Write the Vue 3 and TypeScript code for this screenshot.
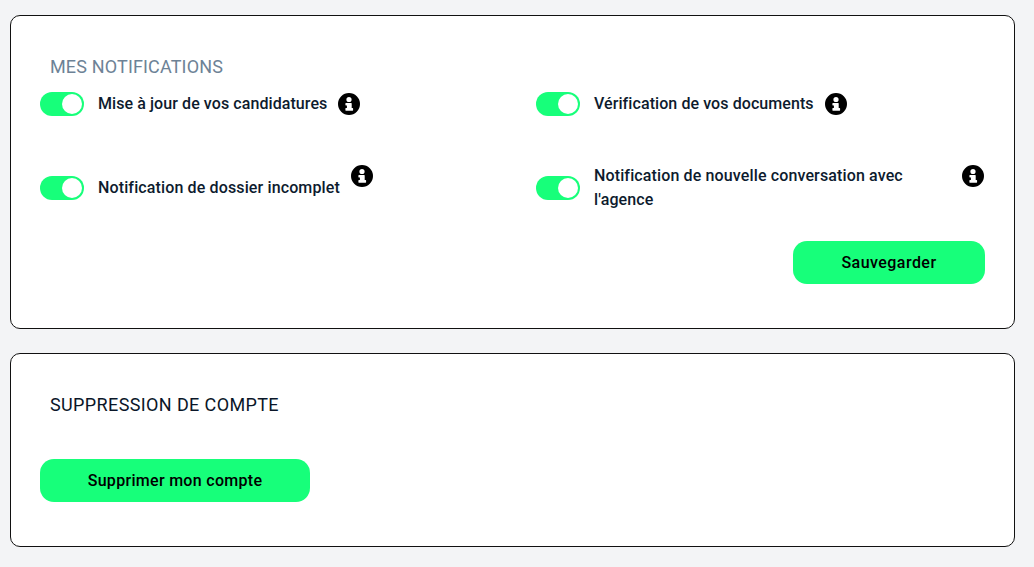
<template>
  <div class="page">
    <section class="card card-notif">
      <h2 class="title title-muted">MES NOTIFICATIONS</h2>
      <div class="notif-grid">
        <div v-for="n in notifications" :key="n.label" class="notif" :class="{ tall: n.tall }">
          <span class="toggle"><span class="knob"></span></span>
          <span class="label">{{ n.label }}</span>
          <svg class="info" :class="{ raised: n.tall }" viewBox="0 0 22 22">
            <path fill-rule="evenodd" d="M11 0a11 11 0 1 0 0 22a11 11 0 1 0 0-22zM11 3.9a2.6 2.6 0 1 1 0 5.2a2.6 2.6 0 1 1 0-5.2zM7.9 10h5.3c.3 0 .5.2.5.5V15h.9c.3 0 .5.2.5.5v1.7c0 .3-.2.5-.5.5H7.9c-.3 0-.5-.2-.5-.5v-1.7c0-.3.2-.5.5-.5h1V12.5h-1c-.3 0-.5-.2-.5-.5v-1.5c0-.3.2-.5.5-.5z" />
          </svg>
        </div>
      </div>
      <div class="actions">
        <button class="btn btn-save">Sauvegarder</button>
      </div>
    </section>
    <section class="card card-delete">
      <h2 class="title title-dark">SUPPRESSION DE COMPTE</h2>
      <button class="btn btn-delete">Supprimer mon compte</button>
    </section>
  </div>
</template>

<script setup lang="ts">
const notifications = [
  { label: 'Mise à jour de vos candidatures', tall: false },
  { label: 'Vérification de vos documents', tall: false },
  { label: 'Notification de dossier incomplet', tall: true },
  { label: 'Notification de nouvelle conversation avec l\'agence', tall: true },
]
</script>

<style>
body {
  background: #f3f4f6;
}
</style>

<style scoped>
.page {
  padding: 15px 19px 20px 10px;
  display: flex;
  flex-direction: column;
  gap: 24px;
  font-family: Roboto, "Liberation Sans", sans-serif;
  color: #0d1b2e;
}
.card {
  background: #fff;
  border: 1px solid #111;
  border-radius: 10px;
  padding: 0 29px;
  box-sizing: border-box;
}
.card-notif {
  height: 314px;
  padding-top: 39px;
}
.card-delete {
  height: 194px;
  padding-top: 39px;
}
.title {
  margin: 0;
  padding-left: 10px;
  font-size: 18px;
  line-height: 24px;
  font-weight: 400;
}
.title-muted {
  color: #6d8296;
  letter-spacing: 0.15px;
}
.title-dark {
  color: #0a1628;
  letter-spacing: 0.38px;
}
.notif-grid {
  display: grid;
  grid-template-columns: 496px 448px;
  row-gap: 48px;
  margin-top: 13px;
}
.notif {
  display: flex;
  align-items: center;
  min-height: 24px;
}
.notif.tall {
  min-height: 48px;
}
.toggle {
  flex: none;
  width: 43.5px;
  height: 24px;
  border-radius: 12px;
  background: #17ff7a;
  display: flex;
  align-items: center;
  justify-content: flex-end;
  padding-right: 2px;
  box-sizing: border-box;
}
.knob {
  width: 20px;
  height: 20px;
  border-radius: 50%;
  background: #fff;
}
.label {
  margin-left: 14.5px;
  font-size: 16px;
  line-height: 24px;
  font-weight: 500;
  letter-spacing: 0.08px;
}
.tall .label {
  letter-spacing: 0.13px;
}
.info {
  flex: none;
  width: 22px;
  height: 22px;
  margin-left: 11px;
  fill: #000;
}
.info.raised {
  align-self: flex-start;
  margin-top: 1px;
}
.actions {
  display: flex;
  justify-content: flex-end;
  margin-top: 29px;
}
.btn {
  height: 43px;
  border: none;
  border-radius: 14px;
  background: #17ff7a;
  color: #000;
  font-family: inherit;
  font-size: 16px;
  font-weight: 500;
}
.btn-save {
  width: 192px;
  letter-spacing: 0.45px;
}
.btn-delete {
  display: block;
  width: 270px;
  margin-top: 42px;
  letter-spacing: 0.3px;
}
</style>
